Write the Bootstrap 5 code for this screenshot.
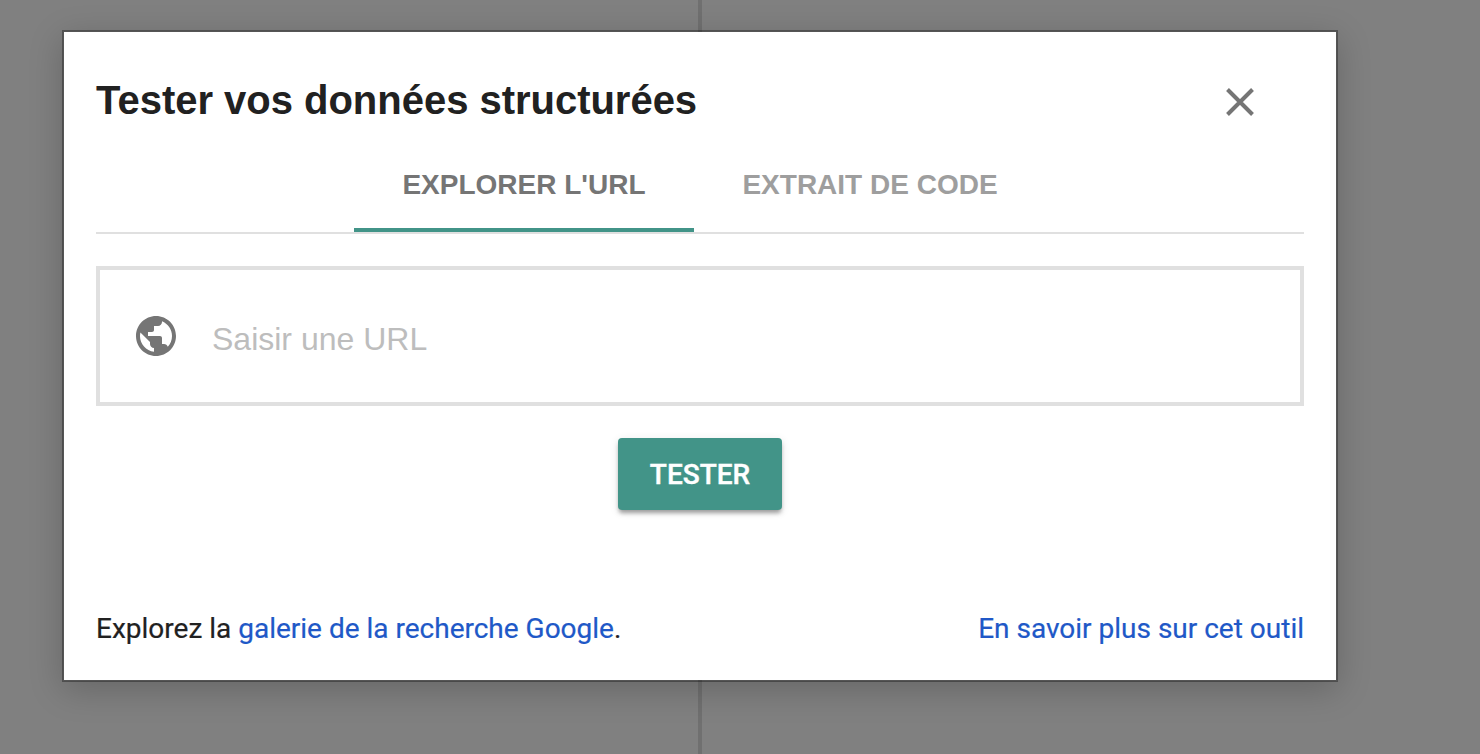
<!DOCTYPE html>
<html lang="fr">
<head>
<meta charset="utf-8">
<meta name="viewport" content="width=device-width, initial-scale=1">
<title>Tester vos données structurées</title>
<link href="https://cdn.jsdelivr.net/npm/bootstrap@5.3.0/dist/css/bootstrap.min.css" rel="stylesheet">
<style>
body { background: #808080; color: #212121; font-family: "Liberation Sans", Arial, sans-serif; }
.pane-left { width: 702px; border-right: 4px solid #707070; }
.test-dialog { width: 1276px; max-width: none; margin: 30px 0 0 62px; }
.test-dialog .modal-content {
  height: 652px; padding: 0 32px; border: 2px solid rgba(0,0,0,.333); border-radius: 0;
  background-color: #fff; background-clip: padding-box;
  box-shadow: 0 8px 32px rgba(0,0,0,.2);
}
.dialog-head { height: 136px; padding: 0 50px 0 0; }
.dialog-title { margin-top: 44px; font-size: 40px; font-weight: 700; line-height: 48px; letter-spacing: -.02px; }
.close-btn { width: 28px; height: 28px; margin-top: 56px; color: #757575; line-height: 0; }
.mode-tabs { height: 66px; border-bottom: 2px solid #e0e0e0; }
.mode-tabs .nav-link {
  height: 64px; padding: 1px 48px 0; border-bottom: 4px solid transparent; border-radius: 0;
  color: #9e9e9e; font-size: 28px; font-weight: 700; line-height: 32px; white-space: nowrap;
}
.mode-tabs .nav-link.active { width: 340px; border-bottom-color: #429488; color: #757575; }
.url-box { height: 140px; margin-top: 32px; border: 4px solid #e0e0e0; padding: 0 32px; }
.url-box .form-control { margin-left: 32px; font-size: 32px; line-height: 40px; color: #212121; padding: 5px 0 0; border-radius: 0; }
.url-box .form-control::placeholder { color: #bdbdbd; opacity: 1; }
.test-btn {
  width: 164px; height: 72px; margin-top: 32px; padding: 0; border: 0; border-radius: 4px;
  --bs-btn-color: #fff; --bs-btn-bg: #429488; --bs-btn-hover-color: #fff; --bs-btn-hover-bg: #3a8378;
  font: 500 28px/74px Roboto, sans-serif; -webkit-text-stroke: .4px #fff;
  box-shadow: 0 4px 4px -1px rgba(0,0,0,.35), 0 2px 10px rgba(0,0,0,.1);
}
.dialog-foot { margin-top: 101px; font: 400 28px/36px Roboto, sans-serif; white-space: nowrap; -webkit-text-stroke: .2px currentColor; }
.dialog-foot a { color: #2058c7; text-decoration: none; }
</style>
</head>
<body class="vh-100 overflow-hidden">
<div class="position-absolute top-0 start-0 h-100 pane-left"></div>
<div class="modal-dialog test-dialog">
  <div class="modal-content">
    <header class="dialog-head d-flex justify-content-between">
      <h1 class="dialog-title mb-0">Tester vos données structurées</h1>
      <button class="btn close-btn border-0 p-0" aria-label="Fermer">
        <svg width="28" height="28" viewBox="0 0 28 28" fill="none" stroke="currentColor" stroke-width="4"><path d="M1.500 1.500 26.500 26.500M26.500 1.500 1.500 26.500"/></svg>
      </button>
    </header>
    <nav class="nav mode-tabs justify-content-center flex-nowrap">
      <a class="nav-link active" href="#">EXPLORER L'URL</a>
      <a class="nav-link" href="#">EXTRAIT DE CODE</a>
    </nav>
    <div class="url-box d-flex align-items-center">
      <svg class="flex-shrink-0" width="48" height="48" viewBox="0 0 24 24" fill="#757575"><path d="M12 2C6.48 2 2 6.48 2 12s4.48 10 10 10 10-4.48 10-10S17.52 2 12 2zm-1 17.93c-3.95-.49-7-3.85-7-7.93 0-.62.08-1.21.21-1.79L9 15v1c0 1.1.9 2 2 2v1.93zm6.9-2.54c-.26-.81-1-1.39-1.9-1.39h-1v-3c0-.55-.45-1-1-1H8v-2h2c.55 0 1-.45 1-1V7h2c1.1 0 2-.9 2-2v-.41c2.93 1.19 5 4.06 5 7.41 0 2.08-.8 3.97-2.1 5.39z"/></svg>
      <input class="form-control border-0 shadow-none" type="text" placeholder="Saisir une URL" aria-label="URL">
    </div>
    <button class="btn test-btn align-self-center">TESTER</button>
    <footer class="dialog-foot d-flex justify-content-between">
      <span>Explorez la <a href="#">galerie de la recherche Google</a>.</span>
      <a href="#">En savoir plus sur cet outil</a>
    </footer>
  </div>
</div>
<script src="https://cdn.jsdelivr.net/npm/bootstrap@5.3.0/dist/js/bootstrap.bundle.min.js"></script>
</body>
</html>
